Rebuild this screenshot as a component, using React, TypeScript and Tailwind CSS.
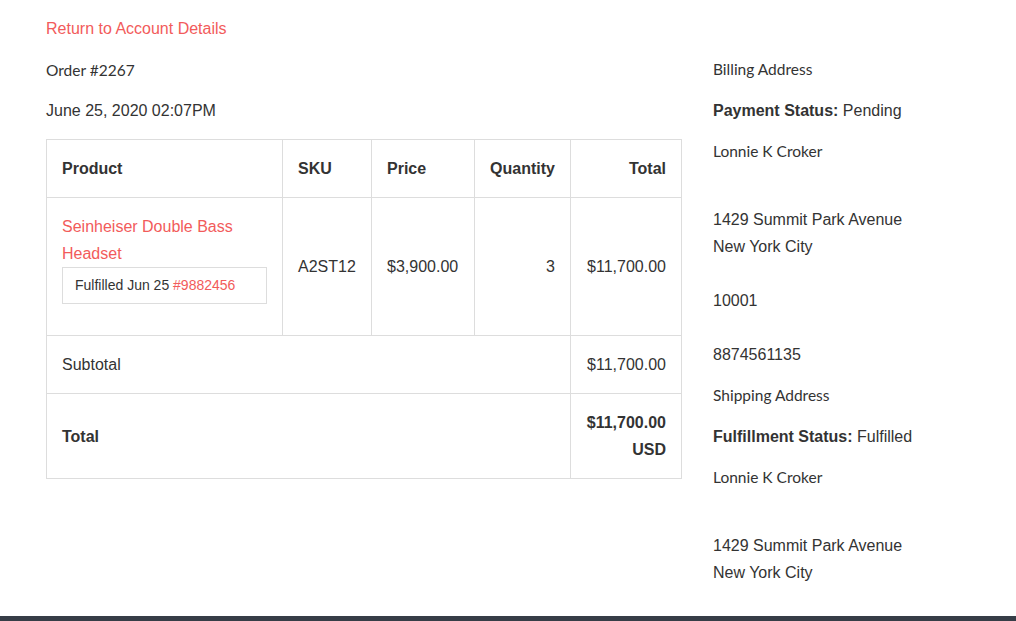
import React from 'react'

const sans = "font-['Liberation_Sans',Arial,sans-serif]"
const humanist = "font-['Lato','Open_Sans',sans-serif]"

type Line = { text: string } | null

const billing: Line[] = [
  null,
  { text: '1429 Summit Park Avenue' },
  { text: 'New York City' },
  null,
  { text: '10001' },
  null,
  { text: '8874561135' },
]

function Address({ title, statusLabel, status, name, lines }: {
  title: string, statusLabel: string, status: string, name: string, lines: Line[]
}) {
  return (
    <div>
      <p className={`${humanist} text-[15.5px] leading-[27px] mb-[14px]`}>{title}</p>
      <p className="leading-[27px] mb-[14px]">
        <span className="font-bold">{statusLabel}</span> {status}
      </p>
      <p className={`${humanist} text-[15.5px] leading-[27px] mb-[14px]`}>{name}</p>
      <div className="mb-[14px]">
        {lines.map((l, i) =>
          l ? <div key={i} className="leading-[27px]">{l.text}</div> : <div key={i} className="h-[27px]" />
        )}
      </div>
    </div>
  )
}

export default function App() {
  const cell = 'border border-[#dddddd] px-[15px] py-[15px] leading-[27px] align-middle'
  return (
    <div className={`${sans} text-[16px] text-[#333333] bg-white min-h-screen relative`}>
      <div className="flex pl-[46px] pt-[15px]">
        <div className="w-[636px] shrink-0">
          <a className="block text-[#f25b5b] leading-[27px] mb-[15px]" href="#">Return to Account Details</a>
          <p className={`${humanist} text-[15.5px] leading-[27px] mb-[13px]`}>Order #2267</p>
          <p className="leading-[27px] mb-[15px]">June 25, 2020 02:07PM</p>
          <table className="w-full border-collapse border border-[#dddddd]">
            <thead>
              <tr className="font-bold">
                <th className={`${cell} text-left w-[236px]`}>Product</th>
                <th className={`${cell} text-left w-[89px]`}>SKU</th>
                <th className={`${cell} text-left w-[103px]`}>Price</th>
                <th className={`${cell} text-right w-[96px]`}>Quantity</th>
                <th className={`${cell} text-right`}>Total</th>
              </tr>
            </thead>
            <tbody>
              <tr>
                <td className={`${cell} text-left`}>
                  <a href="#" className="text-[#f25b5b] block">Seinheiser Double Bass Headset</a>
                  <div className="border border-[#dddddd] px-[12px] py-[4px] text-[14px] leading-[27px] mb-[16px] w-[205px]">
                    Fulfilled Jun 25 <span className="text-[#f25b5b]">#9882456</span>
                  </div>
                </td>
                <td className={cell}>A2ST12</td>
                <td className={cell}>$3,900.00</td>
                <td className={`${cell} text-right`}>3</td>
                <td className={`${cell} text-right`}>$11,700.00</td>
              </tr>
              <tr>
                <td className={cell} colSpan={4}>Subtotal</td>
                <td className={`${cell} text-right`}>$11,700.00</td>
              </tr>
              <tr className="font-bold">
                <td className={cell} colSpan={4}>Total</td>
                <td className={`${cell} text-right`}>$11,700.00<br />USD</td>
              </tr>
            </tbody>
          </table>
        </div>
        <div className="ml-[31px] pt-[41px] flex-1">
          <Address title="Billing Address" statusLabel="Payment Status:" status="Pending" name="Lonnie K Croker" lines={billing} />
          <Address title="Shipping Address" statusLabel="Fulfillment Status:" status="Fulfilled" name="Lonnie K Croker" lines={billing} />
        </div>
      </div>
      <div className="fixed left-0 right-0 bottom-0 h-[5px] bg-[#363d47]" />
    </div>
  )
}
